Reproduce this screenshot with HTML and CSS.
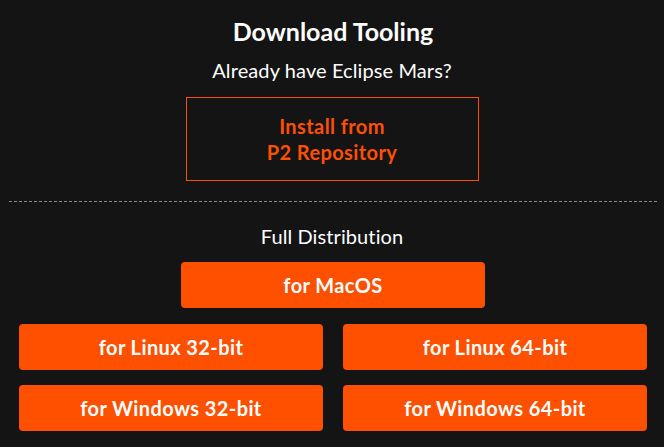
FILE: index.html
```html
<!DOCTYPE html>
<html lang="en">
<head>
<meta charset="utf-8">
<title>Download Tooling</title>
<link rel="stylesheet" href="styles.css">
</head>
<body>
<main class="panel">
  <h2 class="title">Download Tooling</h2>
  <p class="lead">Already have Eclipse Mars?</p>
  <a class="outline-btn" href="#">Install from<br>P2 Repository</a>
  <hr class="divider">
  <p class="lead lead-dist">Full Distribution</p>
  <a class="btn btn-wide" href="#">for MacOS</a>
  <div class="grid">
    <a class="btn" href="#">for Linux 32-bit</a>
    <a class="btn" href="#">for Linux 64-bit</a>
    <a class="btn" href="#">for Windows 32-bit</a>
    <a class="btn" href="#">for Windows 64-bit</a>
  </div>
</main>
</body>
</html>
```
FILE: styles.css
```css
html, body {
  margin: 0;
  padding: 0;
  background: #141414;
}
body {
  font-family: "Lato", "Open Sans", sans-serif;
  color: #ffffff;
}
.panel {
  width: 664px;
  height: 447px;
  display: flex;
  flex-direction: column;
  align-items: center;
  padding-top: 15px;
  box-sizing: border-box;
}
.title {
  margin: 0;
  font-size: 25px;
  line-height: 32px;
  font-weight: 700;
  padding-left: 2px;
}
.lead {
  margin: 10px 0 0;
  font-size: 20px;
  line-height: 26px;
  font-weight: 400;
  letter-spacing: 0.1px;
}
.outline-btn {
  margin-top: 14px;
  width: 293px;
  height: 84px;
  box-sizing: border-box;
  border: 1px solid #ff5000;
  color: #ff5000;
  text-decoration: none;
  font-weight: 700;
  font-size: 20px;
  line-height: 26px;
  letter-spacing: 0.4px;
  display: flex;
  align-items: center;
  justify-content: center;
  text-align: center;
}
.divider {
  align-self: flex-start;
  margin: 20px 0 0 9px;
  width: 648px;
  border: 0;
  border-top: 1px dashed #8a8a8a;
  height: 0;
}
.lead-dist {
  margin-top: 21px;
}
.btn {
  display: flex;
  align-items: center;
  justify-content: center;
  width: 304px;
  height: 46px;
  box-sizing: border-box;
  background: #ff5000;
  color: #ffffff;
  border-radius: 4px;
  text-decoration: none;
  font-weight: 700;
  font-size: 20px;
  letter-spacing: 0.4px;
}
.btn-wide {
  margin-top: 13px;
  margin-left: 2px;
}
.grid {
  margin-top: 16px;
  margin-left: 2px;
  display: grid;
  grid-template-columns: 304px 304px;
  column-gap: 20px;
  row-gap: 15px;
}
```
